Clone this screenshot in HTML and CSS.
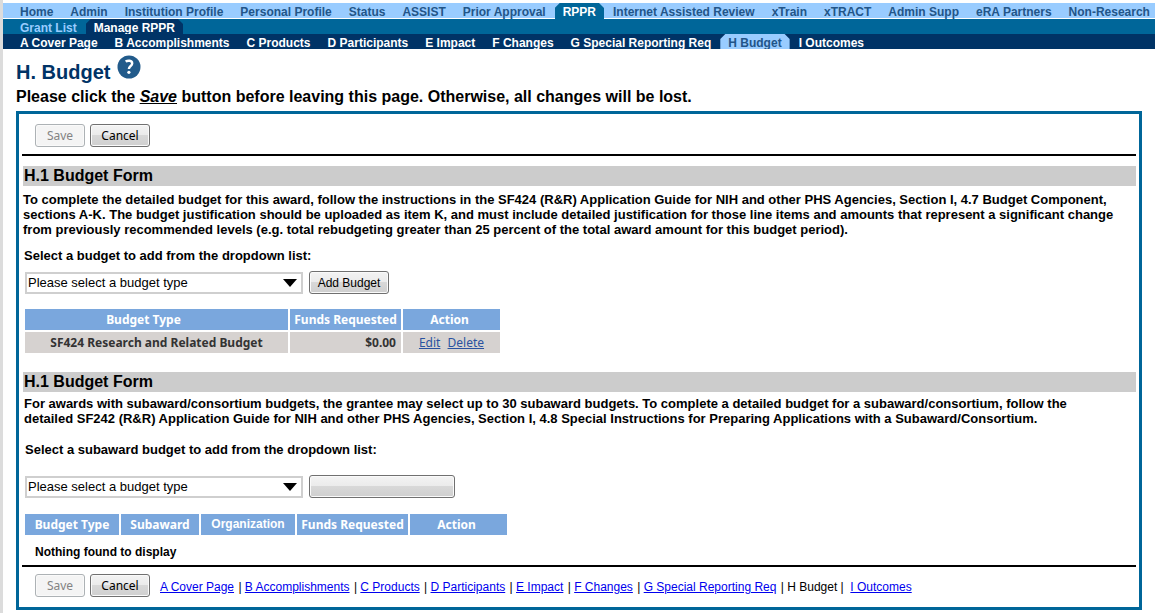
FILE: index.html
```html
<!DOCTYPE html>
<html lang="en">
<head>
  <meta charset="UTF-8" />
  <title>RPPR - H. Budget</title>
  <link rel="stylesheet" href="styles.css">
</head>
<body>
  <!-- main menu -->
  <nav class="menu menu-main">
    <a href="#">Home</a>
    <a href="#">Admin</a>
    <a href="#">Institution Profile</a>
    <a href="#">Personal Profile</a>
    <a href="#">Status</a>
    <a href="#">ASSIST</a>
    <a href="#">Prior Approval</a>
    <a href="#" class="tab">RPPR</a>
    <a href="#">Internet Assisted Review</a>
    <a href="#">xTrain</a>
    <a href="#">xTRACT</a>
    <a href="#">Admin Supp</a>
    <a href="#">eRA Partners</a>
    <a href="#">Non-Research</a>
  </nav>
  <nav class="menu menu-sub">
    <a href="#">Grant List</a>
    <a href="#" class="tab">Manage RPPR</a>
  </nav>
  <nav class="menu menu-sections">
    <a href="#">A Cover Page</a>
    <a href="#">B Accomplishments</a>
    <a href="#">C Products</a>
    <a href="#">D Participants</a>
    <a href="#">E Impact</a>
    <a href="#">F Changes</a>
    <a href="#">G Special Reporting Req</a>
    <a href="#" class="tab">H Budget</a>
    <a href="#">I Outcomes</a>
  </nav>

  <main>
    <div class="page-title">
      <h1>H. Budget</h1>
      <a href="#" class="help" aria-label="Help">
        <svg width="24" height="24" viewBox="0 0 24 24">
          <circle cx="12" cy="12" r="11.5" fill="#225b8b" />
          <path d="M8.6 6.6C10.6 5.3 15.2 5 15.2 8.4C15.2 11 11.9 11 11.9 14" fill="none" stroke="#fff" stroke-width="2.4" />
          <circle cx="11.9" cy="17.3" r="1.6" fill="#fff" />
        </svg>
      </a>
    </div>
    <p class="notice">Please click the <em>Save</em> button before leaving this page. Otherwise, all changes will be lost.</p>

    <form class="panel">
      <div class="actions">
        <button type="button" disabled>Save</button>
        <button type="button">Cancel</button>
      </div>

      <!-- budget -->
      <section class="budget">
        <h2>H.1 Budget Form</h2>
        <p>To complete the detailed budget for this award, follow the instructions in the SF424 (R&amp;R) Application Guide for NIH and other PHS Agencies, Section I, 4.7 Budget Component,<br>
        sections A-K. The budget justification should be uploaded as item K, and must include detailed justification for those line items and amounts that represent a significant change<br>
        from previously recommended levels (e.g. total rebudgeting greater than 25 percent of the total award amount for this budget period).</p>
        <label for="budgetType">Select a budget to add from the dropdown list:</label>
        <div class="picker">
          <div class="select-box">
            <select id="budgetType">
              <option>Please select a budget type</option>
            </select>
            <svg class="arrow" width="14" height="8" viewBox="0 0 14 8"><path d="M0 0H14L7 8Z" /></svg>
          </div>
          <button type="button" class="btn-add">Add Budget</button>
        </div>
        <table>
          <thead>
            <tr>
              <th class="col-type">Budget Type</th>
              <th class="col-funds">Funds Requested</th>
              <th class="col-action">Action</th>
            </tr>
          </thead>
          <tbody>
            <tr>
              <td>SF424 Research and Related Budget</td>
              <td class="amount">$0.00</td>
              <td class="links"><a href="#">Edit</a> <a href="#">Delete</a></td>
            </tr>
          </tbody>
        </table>
      </section>

      <!-- subaward budget -->
      <section class="subaward">
        <h2>H.1 Budget Form</h2>
        <p>For awards with subaward/consortium budgets, the grantee may select up to 30 subaward budgets. To complete a detailed budget for a subaward/consortium, follow the<br>
        detailed SF242 (R&amp;R) Application Guide for NIH and other PHS Agencies, Section I, 4.8 Special Instructions for Preparing Applications with a Subaward/Consortium.</p>
        <label for="subawardType">Select a subaward budget to add from the dropdown list:</label>
        <div class="picker">
          <div class="select-box">
            <select id="subawardType">
              <option>Please select a budget type</option>
            </select>
            <svg class="arrow" width="14" height="8" viewBox="0 0 14 8"><path d="M0 0H14L7 8Z" /></svg>
          </div>
          <button type="button" class="btn-subaward" aria-label="Add subaward budget"></button>
        </div>
        <table>
          <thead>
            <tr>
              <th class="col-short">Budget Type</th>
              <th class="col-subaward">Subaward</th>
              <th class="col-short col-org">Organization</th>
              <th class="col-funds">Funds Requested</th>
              <th class="col-action">Action</th>
            </tr>
          </thead>
        </table>
        <div class="empty">Nothing found to display</div>
      </section>

      <div class="actions actions-bottom">
        <button type="button" disabled>Save</button>
        <button type="button">Cancel</button>
        <div class="section-links">
          <a href="#">A Cover Page</a> | <a href="#">B Accomplishments</a> | <a href="#">C Products</a> | <a href="#">D Participants</a> | <a href="#">E Impact</a> | <a href="#">F Changes</a> | <a href="#">G Special Reporting Req</a> | H Budget | &nbsp;<a href="#">I Outcomes</a>
        </div>
      </div>
    </form>
  </main>
</body>
</html>
```
FILE: styles.css
```css
body {
  margin: 0;
  padding-top: 3px;
  border-left: 3px solid #dcdcdc;
  background: #fff;
  color: #000;
  font-family: "Liberation Sans", Arial, sans-serif;
  font-size: 13px;
}

h1, h2, p {
  margin: 0;
}

/* menus */
.menu {
  display: flex;
  gap: 17px;
  height: 15px;
  padding-left: 17px;
  line-height: 18px;
  font-size: 12px;
  font-weight: bold;
  white-space: nowrap;
  overflow: hidden;
}

.menu a {
  color: inherit;
  text-decoration: none;
}

.menu .tab {
  margin: 0 -8px;
  padding: 0 8px;
  clip-path: polygon(5px 0, calc(100% - 5px) 0, 100% 5px, 100% 100%, 0 100%, 0 5px);
}

/* the white line under the main menu is open below the current tab */
.menu-main {
  height: 16px;
  background: linear-gradient(#99ccff 15px, #fff 15px);
  color: #225588;
}

.menu-main .tab {
  background: #006699;
  color: #fff;
}

.menu-sub {
  background: #006699;
  color: #99ccff;
}

.menu-sub .tab {
  background: #003366;
  color: #fff;
}

.menu-sections {
  background: #003366;
  color: #fff;
}

.menu-sections .tab {
  background: #99ccff;
  color: #225588;
}

/* page heading */
main {
  padding: 6px 13px 3px;
}

.page-title {
  display: flex;
  gap: 7px;
}

h1 {
  padding: 5px 0 1px;
  color: #003366;
  font-size: 20px;
  line-height: 24px;
}

.help {
  height: 24px;
}

.notice {
  padding: 2px 0 5px;
  font-size: 16px;
  font-weight: bold;
  line-height: 19px;
}

.notice em {
  text-decoration: underline;
}

.panel {
  padding: 0 3px;
  border: 3px solid #006699;
}

/* buttons */
button {
  box-sizing: border-box;
  height: 23px;
  padding: 0;
  border: 1px solid #707070;
  border-radius: 3px;
  background: linear-gradient(#f3f3f3 0%, #ebebeb 48%, #d8d8d8 50%, #cfcfcf 100%);
  box-shadow: inset 0 0 0 1px #fafafa;
  color: #000;
  font-family: "Noto Sans", Tahoma, sans-serif;
  font-size: 12px;
}

button:disabled {
  border-color: #adb2b5;
  background: #f4f4f4;
  color: #838383;
}

.actions {
  display: flex;
  align-items: center;
  gap: 5px;
  padding: 10px 13px 7px;
  border-bottom: 2px solid #000;
}

.actions button {
  width: 60px;
}

.actions button:disabled {
  width: 50px;
}

.actions-bottom {
  padding-top: 7px;
  padding-bottom: 10px;
  border-top: 2px solid #000;
  border-bottom: 0;
}

.section-links {
  padding: 2px 0 0 5px;
  font-size: 12px;
  white-space: nowrap;
}

.section-links a {
  margin-right: 1px;
  color: #0000ee;
}

/* form sections */
section {
  padding-left: 1px;
}

h2 {
  padding-left: 1px;
  background: #cccccc;
  font-size: 16px;
  line-height: 20px;
}

.budget {
  padding-top: 10px;
}

section p {
  padding-top: 6px;
  font-weight: bold;
  line-height: 15px;
}

.subaward p {
  padding: 4px 0 0 1px;
}

label {
  display: block;
  padding: 11px 0 8px 1px;
  font-weight: bold;
  line-height: 15px;
}

.subaward label {
  padding: 16px 0 18px 2px;
}

.picker {
  display: flex;
  align-items: center;
  gap: 6px;
  padding-left: 2px;
}

.select-box {
  position: relative;
  width: 278px;
}

select {
  appearance: none;
  box-sizing: border-box;
  width: 100%;
  height: 22px;
  padding: 0 24px 0 1px;
  border: 2px solid #cfcfcf;
  border-radius: 0;
  background: #fff;
  color: #000;
  font-family: "Liberation Sans", Arial, sans-serif;
  font-size: 13px;
  display: block;
}

.arrow {
  position: absolute;
  top: 7px;
  right: 6px;
  pointer-events: none;
}

.btn-add {
  width: 80px;
  font-family: "Liberation Sans", Arial, sans-serif;
}

.btn-subaward {
  width: 146px;
}

/* tables */
table {
  margin-top: 13px;
  border-spacing: 2px;
  font-family: "Noto Sans", Tahoma, sans-serif;
  font-size: 12px;
  font-weight: bold;
}

th, td {
  box-sizing: border-box;
  height: 21px;
  padding: 0;
  line-height: 17px;
  text-align: center;
  white-space: nowrap;
}

th {
  background: #7aa7dd;
  color: #fff;
}

td {
  background: #d6d2d0;
  color: #333;
}

.col-type {
  width: 263px;
  padding-right: 26px;
}

.col-funds {
  width: 111px;
}

.col-action {
  width: 97px;
  padding-right: 4px;
}

.col-short {
  width: 94px;
}

.col-subaward {
  width: 78px;
}

.col-org {
  font-family: "Liberation Sans", Arial, sans-serif;
}

.amount {
  padding-right: 5px;
  text-align: right;
}

.links {
  font-weight: normal;
}

.links a {
  margin: 0 2px;
  color: #2a52a0;
}

.budget table {
  margin-bottom: 17px;
}

.subaward table {
  margin-top: 14px;
}

.empty {
  padding: 8px 0 5px 12px;
  font-size: 12px;
  font-weight: bold;
  line-height: 15px;
}
```
